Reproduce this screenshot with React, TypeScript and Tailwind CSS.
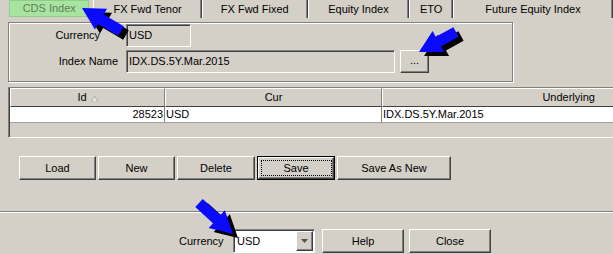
import React from "react";

type Pt = [number, number];

function arrowPoints(tip: Pt, tail: Pt, headLen = 22, headHalf = 12, shaftHalf = 5.5): string {
  const dx = tip[0] - tail[0];
  const dy = tip[1] - tail[1];
  const len = Math.hypot(dx, dy);
  const ux = dx / len;
  const uy = dy / len;
  const px = -uy;
  const py = ux;
  const bx = tip[0] - ux * headLen;
  const by = tip[1] - uy * headLen;
  const pts: Pt[] = [
    [tail[0] + px * shaftHalf, tail[1] + py * shaftHalf],
    [bx + px * shaftHalf, by + py * shaftHalf],
    [bx + px * headHalf, by + py * headHalf],
    tip,
    [bx - px * headHalf, by - py * headHalf],
    [bx - px * shaftHalf, by - py * shaftHalf],
    [tail[0] - px * shaftHalf, tail[1] - py * shaftHalf],
  ];
  return pts.map((p) => `${p[0].toFixed(1)},${p[1].toFixed(1)}`).join(" ");
}

const arrows: { tip: Pt; tail: Pt }[] = [
  { tip: [82, 8], tail: [121, 31] },
  { tip: [419, 52], tail: [456, 32] },
  { tip: [233, 234], tail: [199, 203] },
];

const raised =
  "border border-t-white border-l-white border-r-[#404040] border-b-[#404040] shadow-[inset_-1px_-1px_0_#808080]";

function Btn({ label, className = "" }: { label: string; className?: string }) {
  return (
    <div className={`flex items-center justify-center bg-[#d4d0c8] ${raised} ${className}`}>
      {label}
    </div>
  );
}

function Tab({ label, w }: { label: string; w: string }) {
  return (
    <div
      className={`${w} h-full flex items-center justify-center border-l border-l-white border-r border-r-[#404040] shadow-[inset_-1px_0_0_#808080]`}
    >
      {label}
    </div>
  );
}

export default function App() {
  return (
    <div
      className="relative w-[613px] h-[254px] overflow-hidden bg-[#d4d0c8] text-[11px] leading-none text-black"
      style={{ fontFamily: '"Liberation Sans", Arial, sans-serif' }}
    >
      {/* Tabs */}
      <div className="flex h-[18px] pl-[9px] whitespace-nowrap">
        <div className="w-[83px] h-[17px] flex items-center justify-center bg-[#a8e4a0] border border-[#8fcf88] text-[#5d7f5d]">
          CDS Index
        </div>
        <div className="w-[4px]" />
        <Tab label="FX Fwd Tenor" w="w-[112px]" />
        <Tab label="FX Fwd Fixed" w="w-[109px]" />
        <Tab label="Equity Index" w="w-[105px]" />
        <Tab label="ETO" w="w-[45px]" />
        <Tab label="Future Equity Index" w="w-[160px] shrink-0" />
      </div>

      {/* Group box */}
      <div className="mt-[4px] ml-[8px] w-[505px] h-[60px] border border-[#808080] shadow-[inset_1px_1px_0_#fff,1px_1px_0_#fff] pt-[1px]">
        <div className="flex items-center h-[23px]">
          <div className="w-[91px] text-right">Currency</div>
          <div className="ml-[26px] w-[65px] h-[23px] flex items-center pl-[2px] border border-t-[#808080] border-l-[#808080] border-r-white border-b-white shadow-[inset_1px_1px_0_#404040]">
            USD
          </div>
        </div>
        <div className="flex items-center h-[23px] mt-[3px]">
          <div className="w-[109px] text-right">Index Name</div>
          <div className="ml-[8px] w-[269px] h-[23px] flex items-center pl-[2px] border border-t-[#808080] border-l-[#808080] border-r-white border-b-white shadow-[inset_1px_1px_0_#404040]">
            IDX.DS.5Y.Mar.2015
          </div>
          <Btn label="..." className="ml-[5px] w-[29px] h-[23px] pb-[2px]" />
        </div>
      </div>

      {/* Table */}
      <div className="mt-[5px] ml-[8px] h-[51px] border-l border-t border-b border-l-[#808080] border-t-[#808080] border-b-white pl-[1px] shadow-[inset_1px_0_0_#404040] whitespace-nowrap">
        <div className="flex h-[19px]">
          <div className="w-[155px] shrink-0 flex items-center justify-center border-l border-l-white border-t border-t-white border-r border-r-[#808080] border-b border-b-[#404040]">
            <span>Id</span>
            <svg width="7" height="6" className="ml-[4px] mt-[2px]" viewBox="0 0 7 6">
              <polygon points="3.5,0 7,6 0,6" fill="#e8e6e0" stroke="#a8a49c" strokeWidth="0.8" />
            </svg>
          </div>
          <div className="w-[217px] shrink-0 flex items-center justify-center border-l border-l-white border-t border-t-white border-r border-r-[#808080] border-b border-b-[#404040]">
            Cur
          </div>
          <div className="w-[240px] shrink-0 flex items-center justify-end pr-[27px] border-l border-l-white border-t border-t-white border-b border-b-[#404040]">
            Underlying
          </div>
        </div>
        <div className="flex h-[16px] bg-white border-b border-b-[#a0a0a0]">
          <div className="w-[155px] shrink-0 flex items-center justify-end pr-[1px] border-r border-r-[#808080]">
            28523
          </div>
          <div className="w-[217px] shrink-0 flex items-center pl-[1px] border-r border-r-[#808080]">
            USD
          </div>
          <div className="flex-1 flex items-center pl-[1px]">IDX.DS.5Y.Mar.2015</div>
        </div>
      </div>

      {/* Action buttons */}
      <div className="mt-[18px] ml-[19px] flex gap-[2px] h-[24px]">
        <Btn label="Load" className="w-[77px]" />
        <Btn label="New" className="w-[77px]" />
        <Btn label="Delete" className="w-[78px]" />
        <div className="w-[78px] border border-black">
          <div className={`h-full flex items-center justify-center ${raised}`}>
            <div className="w-[71px] h-[16px] flex items-center justify-center border border-dotted border-black">
              Save
            </div>
          </div>
        </div>
        <Btn label="Save As New" className="w-[114px]" />
      </div>

      {/* Separator */}
      <div className="mt-[31px] h-[2px] border-t border-t-[#808080] border-b border-b-white" />

      {/* Bottom row */}
      <div className="mt-[16px] flex items-center h-[24px]">
        <div className="ml-[179px] w-[54px]">Currency</div>
        <div className="w-[82px] h-[24px] flex items-stretch bg-white border border-t-[#808080] border-l-[#808080] border-r-white border-b-white shadow-[inset_1px_1px_0_#404040]">
          <div className="flex-1 flex items-center pl-[3px]">USD</div>
          <div className={`my-[1px] mr-[1px] w-[17px] flex items-center justify-center bg-[#d4d0c8] ${raised}`}>
            <svg width="7" height="4" viewBox="0 0 7 4">
              <polygon points="0,0 7,0 3.5,4" fill="#505050" />
            </svg>
          </div>
        </div>
        <Btn label="Help" className="ml-[7px] w-[82px] h-[24px]" />
        <Btn label="Close" className="ml-[5px] w-[82px] h-[24px]" />
      </div>

      {/* Annotation arrows */}
      <svg className="absolute inset-0 pointer-events-none" width="613" height="254">
        {arrows.map((a, i) => (
          <polygon
            key={`s${i}`}
            points={arrowPoints(
              [a.tip[0] + 5, a.tip[1] + 4],
              [a.tail[0] + 5, a.tail[1] + 4]
            )}
            fill="#000"
          />
        ))}
        {arrows.map((a, i) => (
          <polygon key={`b${i}`} points={arrowPoints(a.tip, a.tail)} fill="#0a0aff" />
        ))}
      </svg>
    </div>
  );
}
